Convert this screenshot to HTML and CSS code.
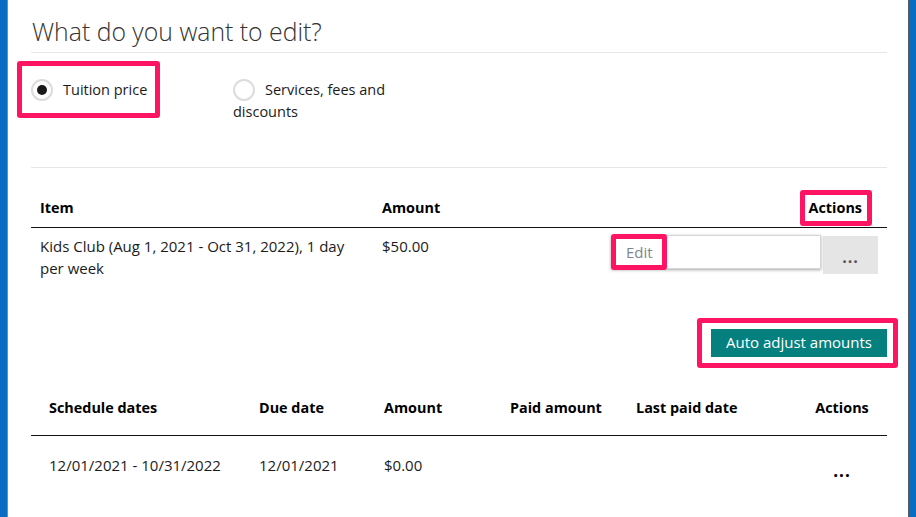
FILE: index.html
```html
<!DOCTYPE html>
<html lang="en">
<head>
<meta charset="utf-8">
<title>Edit tuition</title>
<link rel="stylesheet" href="styles.css">
</head>
<body>
<div class="page">
  <div class="inner">
    <h1 class="title">What do you want to edit?</h1>

    <div class="options">
      <label class="opt opt-first">
        <span class="hl hl-opt"></span>
        <span class="radio checked"></span>Tuition price
      </label>
      <label class="opt opt-second"><span class="radio"></span>Services, fees and discounts</label>
    </div>

    <table class="items">
      <colgroup>
        <col class="c-item">
        <col class="c-amount">
        <col class="c-actions">
      </colgroup>
      <thead>
        <tr>
          <th>Item</th>
          <th>Amount</th>
          <th class="th-actions"><span class="hl-wrap">Actions<span class="hl hl-actions"></span></span></th>
        </tr>
      </thead>
      <tbody>
        <tr>
          <td class="td-item">Kids Club (Aug 1, 2021 - Oct 31, 2022), 1 day per week</td>
          <td>$50.00</td>
          <td class="td-actions">
            <div class="action-group">
              <div class="edit-wrap">
                <input class="edit-input" type="text" placeholder="Edit">
                <span class="hl hl-edit"></span>
              </div>
              <button class="more-btn" type="button">...</button>
            </div>
          </td>
        </tr>
      </tbody>
    </table>

    <div class="adjust-row">
      <button class="adjust-btn" type="button">Auto adjust amounts<span class="hl hl-adjust"></span></button>
    </div>

    <table class="schedule">
      <colgroup>
        <col class="s1"><col class="s2"><col class="s3"><col class="s4"><col class="s5"><col class="s6">
      </colgroup>
      <thead>
        <tr>
          <th>Schedule dates</th>
          <th>Due date</th>
          <th>Amount</th>
          <th>Paid amount</th>
          <th>Last paid date</th>
          <th class="s-actions">Actions</th>
        </tr>
      </thead>
      <tbody>
        <tr>
          <td>12/01/2021 - 10/31/2022</td>
          <td>12/01/2021</td>
          <td>$0.00</td>
          <td></td>
          <td></td>
          <td class="s-actions"><span class="dots">...</span></td>
        </tr>
      </tbody>
    </table>
  </div>
</div>
</body>
</html>
```

FILE: styles.css
```css
html, body {
  margin: 0;
  padding: 0;
  background: #ffffff;
}

body {
  font-family: "Open Sans", "Noto Sans", "DejaVu Sans", sans-serif;
  font-size: 14px;
  color: #1b1b1b;
}

.page {
  border-left: 7px solid #0a6dc4;
  border-right: 7px solid #0a6dc4;
  min-height: 517px;
  box-sizing: border-box;
}

.inner {
  border-left: 1px solid #8a8a8a;
  border-right: 1px solid #5a5a5a;
  min-height: 517px;
  box-sizing: border-box;
  padding: 0 21px 0 23px;
}

.title {
  margin: 0;
  padding: 16px 0 6px 1px;
  font-size: 24.8px;
  line-height: 30px;
  font-weight: 300;
  color: #333333;
  border-bottom: 1px solid #e6e6e6;
}

.options {
  display: flex;
  align-items: flex-start;
  height: 115px;
  box-sizing: border-box;
  padding-top: 26px;
  border-bottom: 1px solid #e6e6e6;
  line-height: 22px;
  font-size: 14.5px;
}

.opt {
  position: relative;
  display: block;
}

.opt-first {
  width: 202px;
}

.opt-second {
  width: 165px;
}

.radio {
  display: inline-block;
  width: 18px;
  height: 18px;
  border: 2px solid #dcdcdc;
  border-radius: 50%;
  vertical-align: -6px;
  margin-right: 10px;
  position: relative;
  box-sizing: content-box;
}

.radio.checked::after {
  content: "";
  position: absolute;
  left: 4px;
  top: 4px;
  width: 10px;
  height: 10px;
  border-radius: 50%;
  background: #1a1a1a;
}

.hl {
  position: absolute;
  border: 5px solid #ff1464;
  border-radius: 3px;
  box-sizing: border-box;
  pointer-events: none;
}

.hl-opt {
  left: -14px;
  top: -18px;
  width: 143px;
  height: 57px;
}

table {
  width: 100%;
  border-collapse: collapse;
  table-layout: fixed;
}

th {
  text-align: left;
  font-weight: 700;
  font-size: 14.4px;
  color: #000;
  line-height: 20px;
  border-bottom: 1px solid #111;
}

td {
  vertical-align: top;
  line-height: 22px;
  font-size: 15px;
}

.items .c-item { width: 342px; }
.items .c-amount { width: 229px; }

.items th {
  padding: 30px 9px 9px 9px;
}

.items .th-actions {
  text-align: right;
  padding-right: 25px;
}

.hl-wrap {
  position: relative;
  display: inline-block;
}

.hl-actions {
  left: -9px;
  top: -8px;
  width: 72px;
  height: 36px;
}

.items td {
  padding: 7px 9px 0 9px;
}

.items .td-item {
  padding-right: 20px;
}

.action-group {
  display: flex;
  align-items: flex-start;
  gap: 2px;
}

.edit-wrap {
  position: relative;
}

.edit-input {
  display: block;
  width: 210px;
  height: 34px;
  box-sizing: border-box;
  margin: 0;
  border: 1px solid #d6d6d6;
  box-shadow: 0 1px 3px rgba(0, 0, 0, 0.35);
  padding: 0 10px 0 14px;
  font-family: "Open Sans", "Noto Sans", sans-serif;
  font-size: 15px;
  color: #333;
  outline: none;
}

.edit-input::placeholder {
  color: #7f8690;
}

.hl-edit {
  left: 0;
  top: -1px;
  width: 56px;
  height: 36px;
}

.more-btn {
  width: 55px;
  height: 38px;
  margin-top: 1px;
  border: none;
  background: #e5e5e5;
  color: #555;
  font-family: "Open Sans", sans-serif;
  font-size: 16px;
  font-weight: 700;
  letter-spacing: 1px;
  padding: 4px 0 0 0;
  line-height: 20px;
}

.adjust-row {
  display: flex;
  justify-content: flex-end;
  padding-top: 50px;
}

.adjust-btn {
  position: relative;
  width: 176px;
  height: 28px;
  margin: 0;
  border: none;
  background: #05807f;
  color: #ffffff;
  font-family: "Open Sans", sans-serif;
  font-size: 15px;
  line-height: 24px;
  padding: 0 0 2px 0;
}

.hl-adjust {
  left: -14px;
  top: -11px;
  width: 201px;
  height: 50px;
}

.schedule .s1 { width: 210px; }
.schedule .s2 { width: 125px; }
.schedule .s3 { width: 126px; }
.schedule .s4 { width: 126px; }
.schedule .s5 { width: 179px; }

.schedule th {
  padding: 41px 0 17px 18px;
}

.schedule td {
  padding: 18px 0 0 18px;
}

.schedule .s-actions {
  text-align: center;
  padding-left: 0;
}

.dots {
  display: inline-block;
  padding-top: 6px;
  font-weight: 700;
  font-size: 17px;
  letter-spacing: 1px;
  color: #000;
}
```
